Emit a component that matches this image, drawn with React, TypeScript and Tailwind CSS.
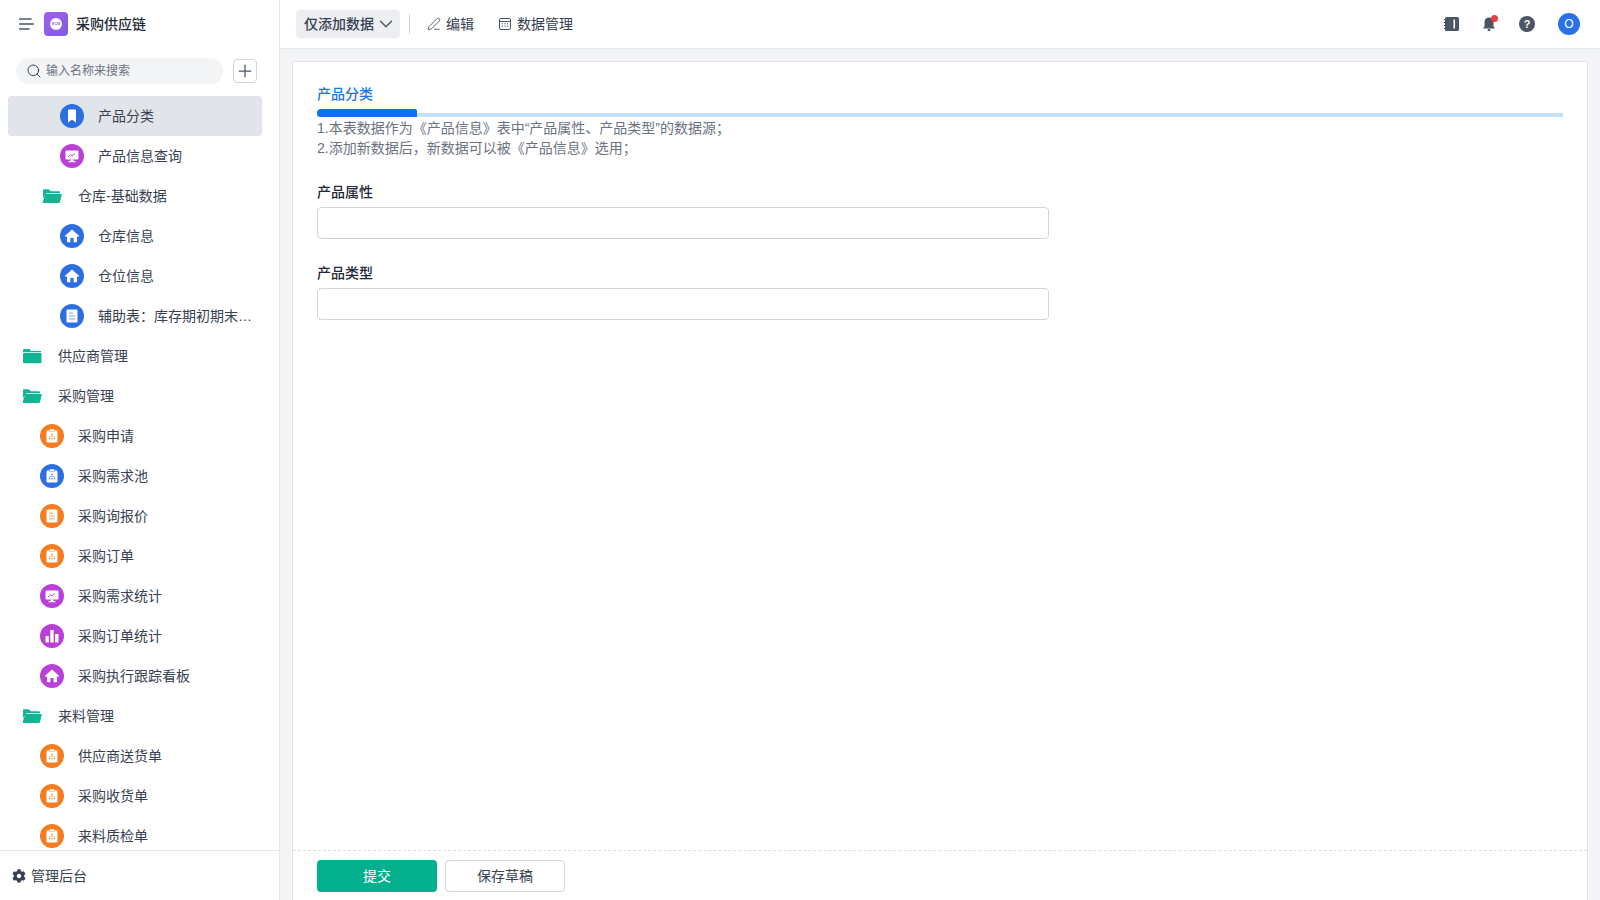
import { ChevronDown, PenLine, Plus, Search } from 'lucide-react';
import { FaCog } from 'react-icons/fa';

type IconKind = 'bookmark' | 'monitor' | 'home' | 'doc' | 'org' | 'bars';

type NavRow =
  | { type: 'folder'; label: string; indent: 'pl-[22px]' | 'pl-[42px]'; open: boolean }
  | { type: 'page'; label: string; icon: IconKind; color: string; indent: 'pl-[40px]' | 'pl-[60px]'; active?: boolean };

const BLUE = 'bg-[#2d6fe0]';
const PURPLE = 'bg-[#b93fd6]';
const ORANGE = 'bg-[#f57c1f]';

const rows: NavRow[] = [
  { type: 'page', label: '产品分类', icon: 'bookmark', color: BLUE, indent: 'pl-[60px]', active: true },
  { type: 'page', label: '产品信息查询', icon: 'monitor', color: PURPLE, indent: 'pl-[60px]' },
  { type: 'folder', label: '仓库-基础数据', indent: 'pl-[42px]', open: true },
  { type: 'page', label: '仓库信息', icon: 'home', color: BLUE, indent: 'pl-[60px]' },
  { type: 'page', label: '仓位信息', icon: 'home', color: BLUE, indent: 'pl-[60px]' },
  { type: 'page', label: '辅助表：库存期初期末…', icon: 'doc', color: BLUE, indent: 'pl-[60px]' },
  { type: 'folder', label: '供应商管理', indent: 'pl-[22px]', open: false },
  { type: 'folder', label: '采购管理', indent: 'pl-[22px]', open: true },
  { type: 'page', label: '采购申请', icon: 'org', color: ORANGE, indent: 'pl-[40px]' },
  { type: 'page', label: '采购需求池', icon: 'org', color: BLUE, indent: 'pl-[40px]' },
  { type: 'page', label: '采购询报价', icon: 'doc', color: ORANGE, indent: 'pl-[40px]' },
  { type: 'page', label: '采购订单', icon: 'org', color: ORANGE, indent: 'pl-[40px]' },
  { type: 'page', label: '采购需求统计', icon: 'monitor', color: PURPLE, indent: 'pl-[40px]' },
  { type: 'page', label: '采购订单统计', icon: 'bars', color: PURPLE, indent: 'pl-[40px]' },
  { type: 'page', label: '采购执行跟踪看板', icon: 'home', color: PURPLE, indent: 'pl-[40px]' },
  { type: 'folder', label: '来料管理', indent: 'pl-[22px]', open: true },
  { type: 'page', label: '供应商送货单', icon: 'org', color: ORANGE, indent: 'pl-[40px]' },
  { type: 'page', label: '采购收货单', icon: 'org', color: ORANGE, indent: 'pl-[40px]' },
  { type: 'page', label: '来料质检单', icon: 'org', color: ORANGE, indent: 'pl-[40px]' },
];

function Glyph({ kind }: { kind: IconKind }) {
  if (kind === 'bookmark') {
    return (
      <svg width="24" height="24" viewBox="0 0 24 24">
        <path d="M8 6.500a1 1 0 0 1 1-1h6a1 1 0 0 1 1 1v12l-4-3-4 3z" fill="#fff" />
      </svg>
    );
  }
  if (kind === 'monitor') {
    return (
      <svg width="24" height="24" viewBox="0 0 24 24">
        <rect x="5.500" y="6.500" width="13" height="9" rx="1" fill="#fff" />
        <path d="M8 13l2.500-2.200 1.600 1.200L15 9.500" stroke="#b93fd6" strokeWidth="1" fill="none" />
        <rect x="10.500" y="15.500" width="3" height="1.500" fill="#fff" />
        <rect x="8.500" y="17" width="7" height="1.200" rx="0.500" fill="#fff" />
      </svg>
    );
  }
  if (kind === 'home') {
    return (
      <svg width="24" height="24" viewBox="0 0 24 24">
        <path d="M12 5.500l7 6.300a.4.4 0 0 1-.3.7H17v5a.8.8 0 0 1-.8.8h-2.600v-4.200h-3.200v4.200H7.800A.8.8 0 0 1 7 17.500v-5H5.300a.4.4 0 0 1-.3-.7z" fill="#fff" />
      </svg>
    );
  }
  if (kind === 'bars') {
    return (
      <svg width="24" height="24" viewBox="0 0 24 24">
        <rect x="5.500" y="12" width="3.400" height="6.500" rx="0.600" fill="#fff" />
        <rect x="10.300" y="6" width="3.400" height="12.500" rx="0.600" fill="#fff" />
        <rect x="15.100" y="10" width="3.400" height="8.500" rx="0.600" fill="#fff" />
      </svg>
    );
  }
  if (kind === 'doc') {
    return (
      <svg width="24" height="24" viewBox="0 0 24 24">
        <rect x="6.500" y="5.500" width="11" height="13" rx="1.200" fill="#fff" />
        <rect x="9" y="8.500" width="4" height="1.200" fill="currentColor" opacity="0.550" />
        <rect x="9" y="11.400" width="6" height="1.200" fill="currentColor" opacity="0.550" />
        <rect x="9" y="14.300" width="6" height="1.200" fill="currentColor" opacity="0.550" />
      </svg>
    );
  }
  return (
    <svg width="24" height="24" viewBox="0 0 24 24">
      <rect x="6.500" y="6.500" width="11" height="12" rx="1.200" fill="#fff" />
      <rect x="9.500" y="5" width="5" height="2.600" rx="0.600" fill="#fff" stroke="currentColor" strokeWidth="0.500" />
      <rect x="11.200" y="9.800" width="1.600" height="1.400" fill="currentColor" opacity="0.800" />
      <path d="M12 11.200v1.300M9.500 14v-1.500h5V14" stroke="currentColor" strokeWidth="0.500" fill="none" opacity="0.800" />
      <rect x="8.800" y="14" width="1.400" height="1.400" fill="currentColor" opacity="0.800" />
      <rect x="11.300" y="14" width="1.400" height="1.400" fill="currentColor" opacity="0.800" />
      <rect x="13.800" y="14" width="1.400" height="1.400" fill="currentColor" opacity="0.800" />
    </svg>
  );
}

function glyphTint(color: string) {
  if (color === BLUE) return 'text-[#2d6fe0]';
  if (color === ORANGE) return 'text-[#f57c1f]';
  return 'text-[#b93fd6]';
}

function FolderIcon({ open }: { open: boolean }) {
  if (open) {
    return (
      <svg width="20" height="16" viewBox="0 0 20 16" className="shrink-0">
        <path d="M1 2.500A1.200 1.200 0 0 1 2.200 1.300h4.600l2 2H17a1 1 0 0 1 1 1v1H4.500L1 10z" fill="#10b592" />
        <path d="M4 6h15a.7.7 0 0 1 .7.900l-1.800 7.400a1 1 0 0 1-1 .7H1.400a.7.7 0 0 1-.7-.9L3 6.700A1 1 0 0 1 4 6z" fill="#10b592" />
      </svg>
    );
  }
  return (
    <svg width="20" height="16" viewBox="0 0 20 16" className="shrink-0">
      <path d="M1 2.300A1.200 1.200 0 0 1 2.200 1.100h5.200l1.800 2H19v1H1z" fill="#10b592" />
      <rect x="1" y="4.800" width="18.500" height="10.400" rx="1.200" fill="#10b592" />
    </svg>
  );
}

function Row({ row }: { row: NavRow }) {
  if (row.type === 'folder') {
    return (
      <div className={`h-10 flex items-center gap-4 ${row.indent}`}>
        <FolderIcon open={row.open} />
        <span className="text-sm text-[#374151]">{row.label}</span>
      </div>
    );
  }
  return (
    <div className={`relative h-10 flex items-center gap-[14px] ${row.indent}`}>
      {row.active && <div className="absolute left-2 top-0 w-[254px] h-10 rounded bg-[#e1e4e8]" />}
      <span className={`relative shrink-0 w-6 h-6 rounded-full flex items-center justify-center ${row.color} ${glyphTint(row.color)}`}>
        <Glyph kind={row.icon} />
      </span>
      <span className="relative text-sm text-[#374151] whitespace-nowrap">{row.label}</span>
    </div>
  );
}

function Sidebar() {
  return (
    <aside className="w-[280px] shrink-0 h-full flex flex-col bg-white border-r border-[#e5e7eb]">
      <div className="h-12 shrink-0 flex items-center pl-[19px]">
        <svg width="15" height="12" viewBox="0 0 15 12" className="shrink-0">
          <path d="M0.500 1h11.500M0.500 6h14M0.500 11h9.500" stroke="#4b5563" strokeWidth="1.500" strokeLinecap="round" />
        </svg>
        <div className="ml-[10px] w-6 h-6 rounded bg-gradient-to-br from-[#a35ff0] to-[#7c5ce0] flex items-center justify-center">
          <span className="w-3 h-3 rounded-full bg-white text-[4px] leading-3 text-center font-bold text-[#9a6cf0]">SCM</span>
        </div>
        <span className="ml-2 text-sm font-medium text-[#1f2937]">采购供应链</span>
      </div>
      <div className="h-12 shrink-0 flex items-center pl-4 pb-[2px]">
        <div className="w-[207px] h-[26px] rounded-full bg-[#f3f4f6] flex items-center pl-[10px] gap-1">
          <Search size={16} strokeWidth={1.5} className="text-[#374151]" />
          <span className="text-xs text-[#6b7280]">输入名称来搜索</span>
        </div>
        <button className="ml-[10px] w-6 h-6 rounded border border-[#d1d5db] flex items-center justify-center text-[#4b5563]">
          <Plus size={20} strokeWidth={1.5} />
        </button>
      </div>
      <div className="flex-1 min-h-0 overflow-hidden">
        {rows.map((row) => (
          <Row key={row.label} row={row} />
        ))}
      </div>
      <div className="h-[50px] shrink-0 border-t border-[#e5e7eb] flex items-center gap-[5px] pl-3">
        <FaCog size={14} className="text-[#374151]" />
        <span className="text-sm text-[#374151]">管理后台</span>
      </div>
    </aside>
  );
}

function TopBar() {
  return (
    <header className="h-[49px] shrink-0 bg-white border-b border-[#e5e7eb] flex items-center pl-4 pr-5">
      <button className="h-7 w-[104px] rounded bg-[#eceef1] flex items-center justify-between pl-2 pr-[3px] text-sm font-medium text-[#374151]">
        仅添加数据
        <ChevronDown size={22} strokeWidth={1.5} className="text-[#4b5563]" />
      </button>
      <div className="w-px h-5 bg-[#d1d5db] ml-[9px]" />
      <div className="ml-[17px] flex items-center gap-[5px] text-sm text-[#374151]">
        <PenLine size={14} strokeWidth={1.5} className="text-[#4b5563]" />
        编辑
      </div>
      <div className="ml-6 flex items-center gap-[5px] text-sm text-[#374151]">
        <svg width="14" height="14" viewBox="0 0 14 14" className="shrink-0">
          <rect x="1.500" y="1.500" width="11" height="11" rx="1.500" stroke="#4b5563" strokeWidth="1" fill="none" />
          <path d="M1.500 4.500h11" stroke="#4b5563" strokeWidth="1" />
          <path d="M3.800 6.800h1.200M6.400 6.800h1.200M9 6.800h1.200M3.800 9.200h1.200M6.400 9.200h1.200M9 9.200h1.200" stroke="#4b5563" strokeWidth="1" />
        </svg>
        数据管理
      </div>
      <div className="ml-auto flex items-center gap-[22px]">
        <svg width="16" height="16" viewBox="0 0 16 16">
          <rect x="2" y="1" width="14" height="14" rx="1.500" fill="#4b5563" />
          <rect x="10.500" y="3.500" width="1.500" height="9" fill="#fff" />
          <path d="M0.800 3.500h2.400M0.800 6.500h2.400M0.800 9.500h2.400M0.800 12.500h2.400" stroke="#4b5563" strokeWidth="1" />
        </svg>
        <span className="relative w-4 h-4">
          <svg width="16" height="16" viewBox="0 0 16 16">
            <path d="M8 1.500a4.500 4.500 0 0 1 4.500 4.500v4.500l1.500 2H2l1.500-2V6A4.500 4.500 0 0 1 8 1.500z" fill="#4b5563" />
            <rect x="6.500" y="13" width="3" height="2" rx="1" fill="#4b5563" />
          </svg>
          <span className="absolute -top-[1px] right-[-1px] w-[7px] h-[7px] rounded-full bg-[#e53e3e]" />
        </span>
        <span className="w-4 h-4 rounded-full bg-[#4b5563] text-white text-[11px] leading-4 text-center font-bold">?</span>
        <span className="ml-[1px] w-[22px] h-[22px] rounded-full bg-[#2873e8] text-white text-xs leading-[22px] text-center">O</span>
      </div>
    </header>
  );
}

function FormField({ label }: { label: string }) {
  return (
    <div className="mb-6">
      <label className="block text-sm font-medium text-[#1f2937] leading-5 mb-[5px]">{label}</label>
      <input type="text" className="block w-[732px] h-8 rounded border border-[#d1d5db] bg-white" />
    </div>
  );
}

export default function App() {
  return (
    <div
      className="w-[1600px] h-[900px] flex overflow-hidden bg-[#f3f4f6]"
      style={{ fontFamily: '"Liberation Sans", "Noto Sans CJK SC", sans-serif' }}
    >
      <Sidebar />
      <div className="flex-1 min-w-0 flex flex-col">
        <TopBar />
        <main className="flex-1 min-h-0 pl-3 pr-3 pt-3">
          <div className="h-full rounded-t border border-b-0 border-[#e0e3e7] bg-white flex flex-col">
            <div className="flex-1 min-h-0 pt-[22px] px-6">
              <div className="text-sm font-medium text-[#1677e8] leading-5 mb-[9px]">产品分类</div>
              <div className="relative h-1 bg-[#c6e0f8] mb-[1px]">
                <div className="absolute left-0 bottom-0 w-[100px] h-2 rounded-tl-[8px] rounded-tr-[4px] rounded-bl-[8px] bg-[#0f72e5]" />
              </div>
              <p className="text-sm leading-5 text-[#6b7280]">1.本表数据作为《产品信息》表中“产品属性、产品类型”的数据源；</p>
              <p className="text-sm leading-5 text-[#6b7280] mb-6">2.添加新数据后，新数据可以被《产品信息》选用；</p>
              <FormField label="产品属性" />
              <FormField label="产品类型" />
            </div>
            <div className="h-[50px] shrink-0 border-t border-dashed border-[#dcdfe3] flex items-center gap-2 px-6 pt-[1px]">
              <button className="w-[120px] h-8 rounded bg-[#03b08d] text-sm text-white">提交</button>
              <button className="w-[120px] h-8 rounded border border-[#d1d5db] bg-white text-sm text-[#374151]">保存草稿</button>
            </div>
          </div>
        </main>
      </div>
    </div>
  );
}
